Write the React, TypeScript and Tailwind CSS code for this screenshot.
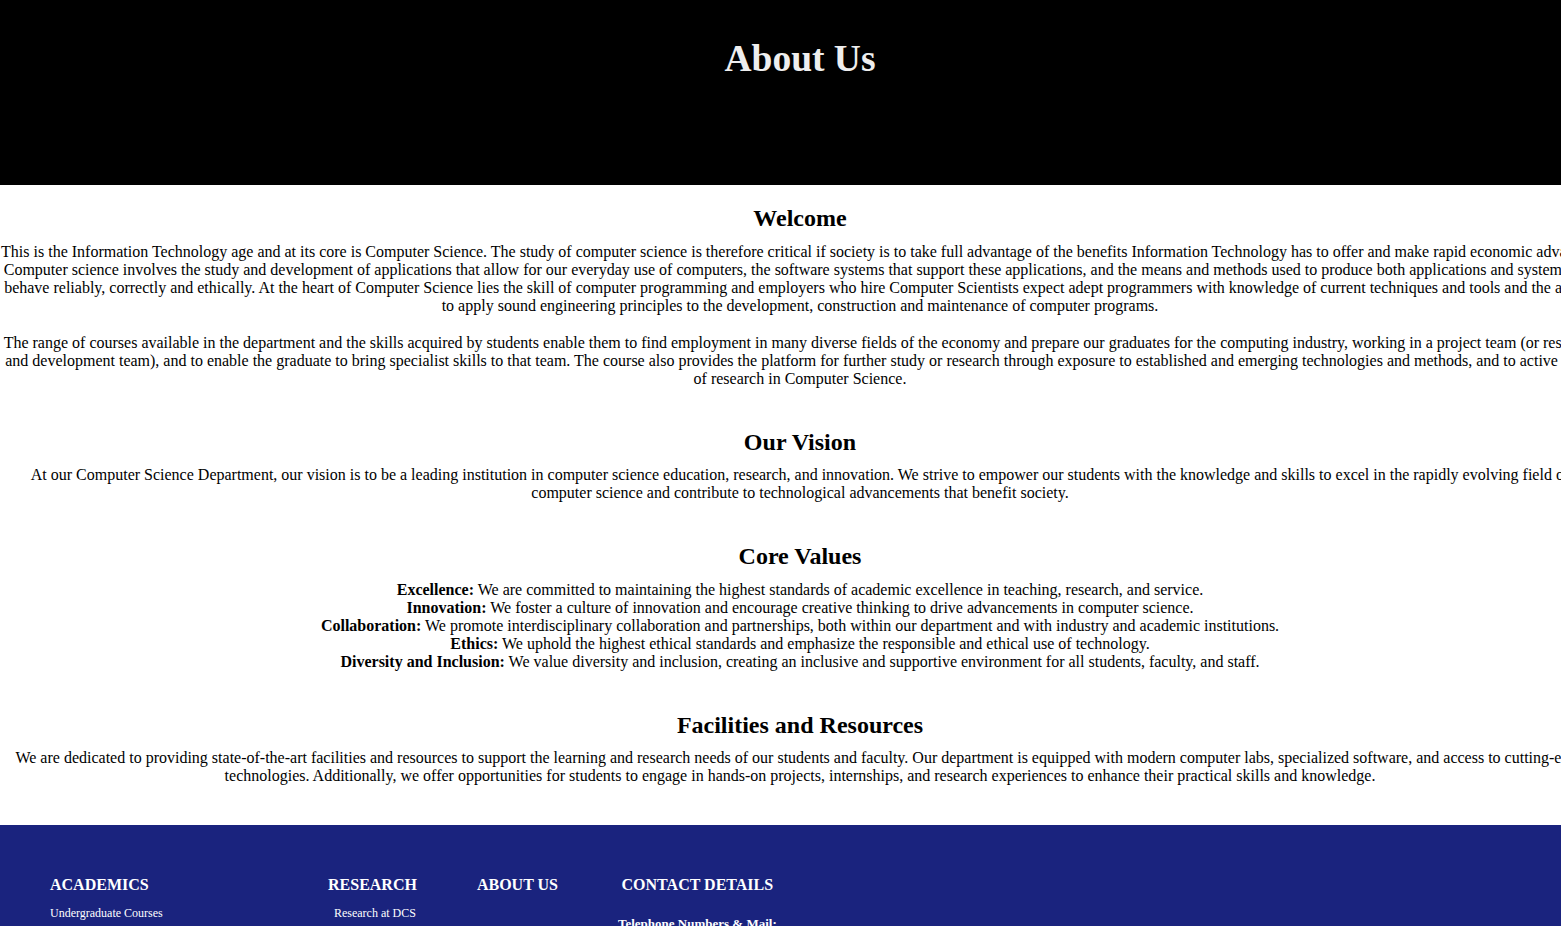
const serif = "font-['Liberation_Serif','Times_New_Roman',serif]";

const coreValues = [
  {
    name: "Excellence:",
    text: "We are committed to maintaining the highest standards of academic excellence in teaching, research, and service.",
  },
  {
    name: "Innovation:",
    text: "We foster a culture of innovation and encourage creative thinking to drive advancements in computer science.",
  },
  {
    name: "Collaboration:",
    text: "We promote interdisciplinary collaboration and partnerships, both within our department and with industry and academic institutions.",
  },
  {
    name: "Ethics:",
    text: "We uphold the highest ethical standards and emphasize the responsible and ethical use of technology.",
  },
  {
    name: "Diversity and Inclusion:",
    text: "We value diversity and inclusion, creating an inclusive and supportive environment for all students, faculty, and staff.",
  },
];

function Section({
  title,
  className,
  children,
}: {
  title: string;
  className?: string;
  children: React.ReactNode;
}) {
  return (
    <section className={className}>
      <h2 className="mb-[10px] text-[24px] font-bold leading-[1.15]">{title}</h2>
      {children}
    </section>
  );
}

function FooterColumn({
  title,
  items,
  className,
}: {
  title: string;
  items: React.ReactNode;
  className?: string;
}) {
  return (
    <div className={className}>
      <h3 className="mb-[12px] text-[16px] font-bold leading-[1.15]">{title}</h3>
      {items}
    </div>
  );
}

export default function App() {
  return (
    <div className={`w-full overflow-hidden bg-white text-black ${serif} leading-[1.15]`}>
      <div className="w-[1600px]">
        <header className="h-[185px] bg-black pt-[37px] text-center">
          <h1 className="text-[37.5px] font-bold leading-[1.15] text-[#eeeeee]">About Us</h1>
        </header>

        <main className="pb-[40px] pt-[20px] text-center text-[16px] leading-[18px]">
          <Section title="Welcome">
            <p>
              This is the Information Technology age and at its core is Computer Science. The study of
              computer science is therefore critical if society is to take full advantage of the benefits
              Information Technology has to offer and make rapid economic advances. Computer science
              involves the study and development of applications that allow for our everyday use of
              computers, the software systems that support these applications, and the means and methods
              used to produce both applications and systems that behave reliably, correctly and ethically.
              At the heart of Computer Science lies the skill of computer programming and employers who
              hire Computer Scientists expect adept programmers with knowledge of current techniques and
              tools and the ability to apply sound engineering principles to the development,
              construction and maintenance of computer programs.
            </p>
            <p className="mt-[19px]">
              The range of courses available in the department and the skills acquired by students enable
              them to find employment in many diverse fields of the economy and prepare our graduates for
              the computing industry, working in a project team (or research and development team), and
              to enable the graduate to bring specialist skills to that team. The course also provides
              the platform for further study or research through exposure to established and emerging
              technologies and methods, and to active areas of research in Computer Science.
            </p>
          </Section>

          <Section title="Our Vision" className="mt-[41px]">
            <p className="px-[28px]">
              At our Computer Science Department, our vision is to be a leading institution in computer
              science education, research, and innovation. We strive to empower our students with the
              knowledge and skills to excel in the rapidly evolving field of computer science and
              contribute to technological advancements that benefit society.
            </p>
          </Section>

          <Section title="Core Values" className="mt-[41px]">
            <div>
              {coreValues.map((v) => (
                <p key={v.name}>
                  <strong className="font-bold">{v.name}</strong> {v.text}
                </p>
              ))}
            </div>
          </Section>

          <Section title="Facilities and Resources" className="mt-[41px]">
            <p className="px-[15px]">
              We are dedicated to providing state-of-the-art facilities and resources to support the
              learning and research needs of our students and faculty. Our department is equipped with
              modern computer labs, specialized software, and access to cutting-edge technologies.
              Additionally, we offer opportunities for students to engage in hands-on projects,
              internships, and research experiences to enhance their practical skills and knowledge.
            </p>
          </Section>
        </main>

        <footer className="flex gap-[60px] bg-[#1a237e] px-[50px] pb-[40px] pt-[51px] text-white">
          <FooterColumn
            title="ACADEMICS"
            className="w-[218px] text-left"
            items={
              <ul className="flex flex-col gap-[6px] text-[12px]">
                <li>Undergraduate Courses</li>
                <li>Postgraduate Courses</li>
                <li>Course Outlines</li>
              </ul>
            }
          />
          <FooterColumn
            title="RESEARCH"
            className="text-right"
            items={
              <ul className="flex flex-col gap-[6px] pr-px text-[12px]">
                <li>Research at DCS</li>
                <li>Publications</li>
              </ul>
            }
          />
          <FooterColumn title="ABOUT US" className="text-center" items={null} />
          <FooterColumn
            title="CONTACT DETAILS"
            className="text-center"
            items={
              <div className="pt-[10px] text-[13px]">
                <p className="font-bold">Telephone Numbers &amp; Mail:</p>
                <p>+000 000 0000</p>
              </div>
            }
          />
        </footer>
      </div>
    </div>
  );
}
